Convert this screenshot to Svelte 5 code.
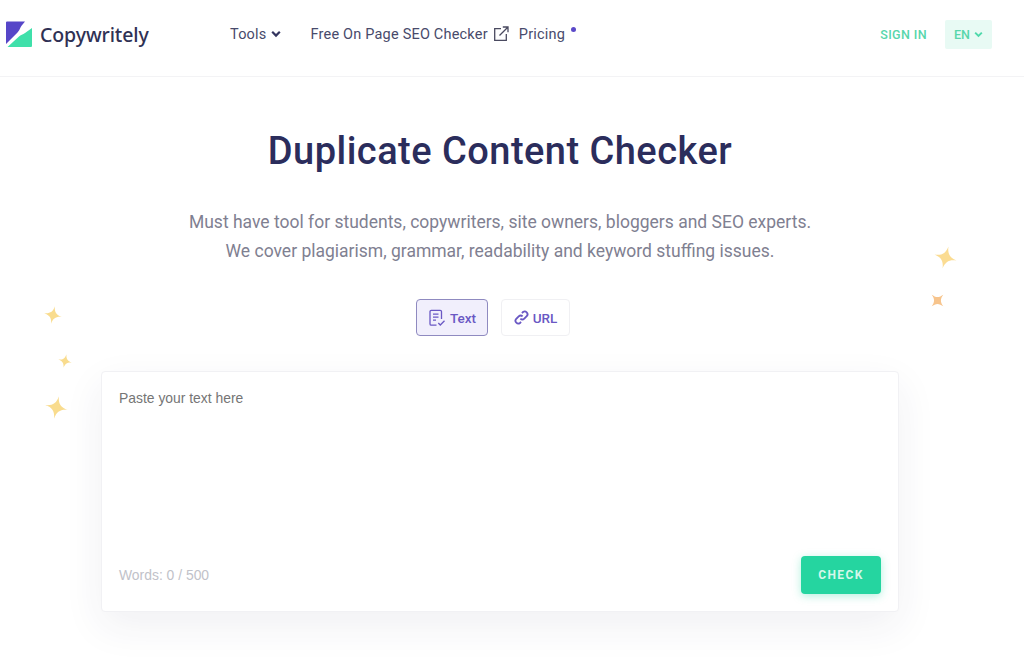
<script>
  const navText = 'Free On Page SEO Checker';
  // sparkles sit on a free canvas behind the content
  const stars = [
    { x: 44, y: 306, s: 18, r: 12, c: '#f9dc8e' },
    { x: 58, y: 354, s: 14, r: 12, c: '#f9dc8e' },
    { x: 45, y: 396, s: 23, r: 12, c: '#f9dc8e' },
    { x: 934, y: 246, s: 23, r: 15, c: '#fbdc92' },
    { x: 929, y: 292, s: 17, r: 45, c: '#f7c48c' }
  ];
</script>

<div class="page">
  {#each stars as st}
    <svg class="star" viewBox="0 0 20 20" width={st.s} height={st.s} style="left:{st.x}px;top:{st.y}px;transform:rotate({st.r}deg)">
      <path d="M10 0C10.8 6.500 13.500 9.200 20 10C13.500 10.800 10.800 13.500 10 20C9.200 13.500 6.500 10.800 0 10C6.500 9.200 9.200 6.500 10 0Z" fill={st.c} />
    </svg>
  {/each}

  <header class="header">
    <a class="logo">
      <svg viewBox="0 0 26 26" width="26" height="26">
        <path d="M1 0.500H19C17 3 15.500 4.500 14.500 6.500C13.500 8.500 13 10 11.500 11.500L0 23V1.500A1 1 0 0 1 1 0.500Z" fill="#5646c8" />
        <path d="M26 7V25A1 1 0 0 1 25 26H1.500L13 15.500C14.500 14 17 13.500 19 12Z" fill="#3fe0aa" />
      </svg>
      <span>Copywritely</span>
    </a>
    <nav class="nav">
      <a class="tools">Tools
        <svg viewBox="0 0 10 8" width="10" height="8"><path d="M1.200 1.800L5 5.600L8.800 1.800" fill="none" stroke="#34355f" stroke-width="2.200" /></svg>
      </a>
      <a class="free">{navText}
        <svg viewBox="0 0 16 16" width="16" height="16" fill="none" stroke="#4a4a60" stroke-width="1.300">
          <path d="M8 2.700H1.700V14.300H13.300V8" />
          <path d="M6.500 9.500L14.800 1.200M9.800 1H15V6.200" />
        </svg>
      </a>
      <a class="pricing">Pricing<i class="dot"></i></a>
    </nav>
    <div class="right">
      <a class="signin">SIGN IN</a>
      <button class="lang">EN
        <svg viewBox="0 0 10 8" width="9" height="7"><path d="M1.200 1.800L5 5.600L8.800 1.800" fill="none" stroke="#4fd9ab" stroke-width="2.200" /></svg>
      </button>
    </div>
  </header>

  <main class="main">
    <h1>Duplicate Content Checker</h1>
    <p class="lead">Must have tool for students, copywriters, site owners, bloggers and SEO experts.<br />We cover plagiarism, grammar, readability and keyword stuffing issues.</p>

    <div class="tabs">
      <button class="tab active">
        <svg viewBox="0 0 18 18" width="18" height="18" fill="none" stroke="#6a58c4" stroke-width="1.300">
          <path d="M8.500 16.200H3.300A1.300 1.300 0 0 1 2 14.900V2.600A1.300 1.300 0 0 1 3.300 1.300H12.200A1.300 1.300 0 0 1 13.500 2.600V10" />
          <path d="M5 5.200H10.500M5 8.200H10.500M5 11.200H8" />
          <path d="M10.300 14L12.300 16L16.500 11.800" />
        </svg>
        Text
      </button>
      <button class="tab">
        <svg viewBox="0 0 16 16" width="15" height="15" fill="none" stroke="#6a58c4" stroke-width="2">
          <path d="M6.800 9.200A3 3 0 0 0 11 9.200L13.800 6.400A3 3 0 0 0 9.600 2.200L8.500 3.300" />
          <path d="M9.200 6.800A3 3 0 0 0 5 6.800L2.200 9.600A3 3 0 0 0 6.400 13.800L7.500 12.700" />
        </svg>
        URL
      </button>
    </div>

    <section class="card">
      <div class="placeholder">Paste your text here</div>
      <div class="foot">
        <span class="words">Words: 0 / 500</span>
        <button class="check">CHECK</button>
      </div>
    </section>
  </main>
</div>

<style>
  :global(body) {
    margin: 0;
    background: #fff;
  }

  .page {
    position: relative;
    height: 670px;
    overflow: hidden;
    font-family: Roboto, "Liberation Sans", sans-serif;
  }

  .star {
    position: absolute;
  }

  .header {
    display: flex;
    align-items: center;
    height: 77px;
    box-sizing: border-box;
    padding: 2px 32px 10px 6px;
    border-bottom: 1px solid #f3f3f5;
  }

  .logo {
    display: flex;
    align-items: center;
    gap: 8px;
    width: 224px;
    font-family: "Noto Sans", Inter, sans-serif;
    font-size: 19.500px;
    font-weight: 500;
    letter-spacing: -0.100px;
    color: #2f3154;
  }

  .nav {
    display: flex;
    align-items: center;
    font-size: 14.500px;
    letter-spacing: 0.200px;
    color: #484a6b;
  }

  .tools {
    display: flex;
    align-items: center;
    gap: 4px;
    margin-right: 30px;
  }

  .free {
    display: flex;
    align-items: center;
    gap: 5px;
    margin-right: 10px;
  }

  .pricing {
    position: relative;
  }

  .dot {
    position: absolute;
    right: -11px;
    top: 1px;
    width: 5px;
    height: 5px;
    border-radius: 50%;
    background: #5b49c9;
  }

  .right {
    display: flex;
    align-items: center;
    gap: 18px;
    margin-left: auto;
  }

  .signin {
    font-size: 12.500px;
    font-weight: 500;
    letter-spacing: 0.400px;
    color: #57d6ab;
  }

  .lang {
    display: flex;
    align-items: center;
    justify-content: center;
    gap: 4px;
    width: 47px;
    height: 29px;
    padding: 0;
    border: 0;
    border-radius: 2px;
    background: #e8faf4;
    font-family: inherit;
    font-size: 12.500px;
    font-weight: 500;
    color: #57d6ab;
  }

  .main {
    display: flex;
    flex-direction: column;
    align-items: center;
    padding-right: 24px;
  }

  h1 {
    margin: 50px 0 0;
    font-size: 38px;
    line-height: 48px;
    font-weight: 500;
    letter-spacing: 0.470px;
    color: #2b2d5c;
  }

  .lead {
    margin: 33px 0 0;
    font-size: 17.500px;
    line-height: 29px;
    text-align: center;
    color: #7f8091;
  }

  .tabs {
    display: flex;
    gap: 13px;
    margin: 33px 14px 0 0;
  }

  .tab {
    display: flex;
    align-items: center;
    justify-content: center;
    gap: 4px;
    width: 69px;
    height: 37px;
    padding: 0;
    box-sizing: border-box;
    border: 1px solid #f0f0f3;
    border-radius: 4px;
    background: #fff;
    font-family: inherit;
    font-size: 13.500px;
    font-weight: 500;
    color: #6a58c4;
  }

  .tab.active {
    width: 72px;
    border-color: #8f8ac0;
    background: #f1effc;
  }

  .card {
    display: flex;
    flex-direction: column;
    justify-content: space-between;
    box-sizing: border-box;
    width: 798px;
    height: 241px;
    margin-top: 35px;
    padding: 18px 17px 17px 17px;
    border: 1px solid #f1f1f4;
    border-radius: 4px;
    background: #fff;
    box-shadow: 0 14px 40px rgba(40, 40, 80, 0.07);
    font-family: "Liberation Sans", Arial, sans-serif;
    font-size: 13.900px;
  }

  .placeholder {
    color: #757575;
  }

  .foot {
    display: flex;
    align-items: center;
    justify-content: space-between;
  }

  .words {
    color: #c1c2c9;
  }

  .check {
    width: 80px;
    height: 38px;
    padding: 0;
    border: 0;
    border-radius: 4px;
    background: #25d5a0;
    box-shadow: 0 2px 8px rgba(37, 213, 160, 0.35);
    font-family: Roboto, sans-serif;
    font-size: 12px;
    font-weight: 700;
    letter-spacing: 1.400px;
    color: #d5f7ea;
  }
</style>
